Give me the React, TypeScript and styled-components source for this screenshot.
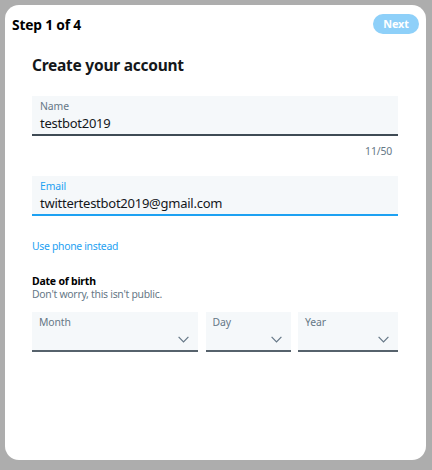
import React from "react";
import styled, { createGlobalStyle } from "styled-components";

const Global = createGlobalStyle`
  html, body { margin: 0; padding: 0; background: #adadad; }
  body { font-family: "Noto Sans", "Open Sans", sans-serif; color: #14171a; }
  * { box-sizing: border-box; }
`;

const Page = styled.div`
  padding: 5px 6px 10px 5px;
  height: 470px;
`;

const Card = styled.div`
  background: #fff;
  border-radius: 14px;
  height: 455px;
  display: flex;
  flex-direction: column;
`;

const Header = styled.div`
  height: 38px;
  display: flex;
  align-items: center;
  justify-content: space-between;
  padding: 0 7px;
`;

const Step = styled.div`
  font-size: 13.8px;
  line-height: 18px;
  letter-spacing: -0.2px;
  margin-top: 2px;
  font-weight: 700;
  color: #000;
`;

const NextButton = styled.button`
  width: 46px;
  height: 20px;
  border: none;
  border-radius: 10px;
  background: #8ed0f9;
  color: #fff;
  font-family: inherit;
  font-weight: 700;
  font-size: 10.8px;
  letter-spacing: -0.1px;
  line-height: 20px;
  padding: 0;
  display: flex;
  align-items: center;
  justify-content: center;
`;

const Body = styled.div`
  padding: 9px 28px 0 27px;
  display: flex;
  flex-direction: column;
`;

const Title = styled.h1`
  margin: 0;
  font-size: 15.5px;
  line-height: 26px;
  letter-spacing: -0.25px;
  font-weight: 700;
  color: #14171a;
`;

const Field = styled.div<{ $focus?: boolean }>`
  background: #f5f8fa;
  height: 40px;
  padding: 4px 8px 0 8px;
  border-bottom: 2px solid ${(p) => (p.$focus ? "#1da1f2" : "#3f4b55")};
  display: flex;
  flex-direction: column;
`;

const Label = styled.div<{ $focus?: boolean }>`
  font-size: 10.4px;
  line-height: 13px;
  letter-spacing: -0.1px;
  color: ${(p) => (p.$focus ? "#1da1f2" : "#657786")};
`;

const Value = styled.div`
  font-size: 13px;
  line-height: 20px;
  letter-spacing: -0.25px;
  color: #14171a;
`;

const Counter = styled.div`
  align-self: flex-end;
  margin: 8px 6px 0 0;
  font-size: 10.4px;
  line-height: 14px;
  letter-spacing: -0.15px;
  color: #657786;
`;

const Spacer = styled.div<{ $h: number }>`
  height: ${(p) => p.$h}px;
  flex: none;
`;

const Link = styled.a`
  font-size: 10.4px;
  line-height: 14px;
  letter-spacing: -0.3px;
  color: #1da1f2;
  text-decoration: none;
`;

const SectionTitle = styled.div`
  font-size: 10.5px;
  line-height: 14px;
  letter-spacing: -0.23px;
  font-weight: 700;
  color: #000;
`;

const SectionNote = styled.div`
  font-size: 10.4px;
  line-height: 13px;
  letter-spacing: -0.26px;
  color: #657786;
`;

const Selects = styled.div`
  display: grid;
  grid-template-columns: 166px 85px 1fr;
  column-gap: 7.5px;
`;

const Select = styled.div`
  position: relative;
  background: #f5f8fa;
  height: 40px;
  padding: 4px 8px 0 7px;
  border-bottom: 2px solid #56626c;
`;

const Chevron = styled.svg`
  position: absolute;
  right: 9px;
  bottom: 7px;
  width: 11px;
  height: 7px;
`;

const DateSelect = ({ label }: { label: string }) => (
  <Select>
    <Label>{label}</Label>
    <Chevron viewBox="0 0 11 7">
      <path d="M0.6 0.8 L5.5 5.8 L10.4 0.8" fill="none" stroke="#657786" strokeWidth="1.2" />
    </Chevron>
  </Select>
);

export default function App() {
  return (
    <>
      <Global />
      <Page>
        <Card>
          <Header>
            <Step>Step 1 of 4</Step>
            <NextButton>Next</NextButton>
          </Header>
          <Body>
            <Title>Create your account</Title>
            <Spacer $h={18} />
            <Field>
              <Label>Name</Label>
              <Value>testbot2019</Value>
            </Field>
            <Counter>11/50</Counter>
            <Spacer $h={18} />
            <Field $focus>
              <Label $focus>Email</Label>
              <Value>twittertestbot2019@gmail.com</Value>
            </Field>
            <Spacer $h={22.5} />
            <Link>Use phone instead</Link>
            <Spacer $h={21} />
            <SectionTitle>Date of birth</SectionTitle>
            <SectionNote>Don't worry, this isn't public.</SectionNote>
            <Spacer $h={11.6} />
            <Selects>
              <DateSelect label="Month" />
              <DateSelect label="Day" />
              <DateSelect label="Year" />
            </Selects>
          </Body>
        </Card>
      </Page>
    </>
  );
}
